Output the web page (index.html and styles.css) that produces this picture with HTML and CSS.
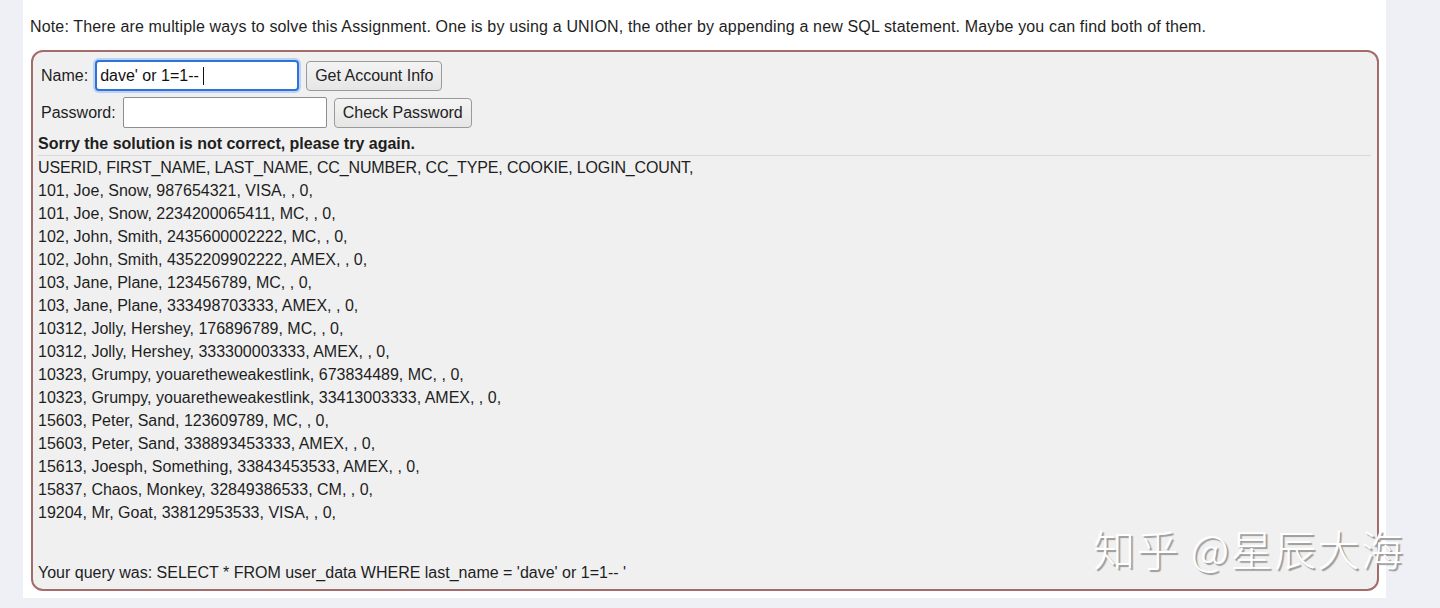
FILE: index.html
```html
<!DOCTYPE html>
<html lang="en">
<head>
<meta charset="utf-8">
<title>SQL Injection</title>
<link rel="stylesheet" href="styles.css">
</head>
<body>
<div class="card">
  <p class="note">Note: There are multiple ways to solve this Assignment. One is by using a UNION, the other by appending a new SQL statement. Maybe you can find both of them.</p>
  <div class="attack">
    <form class="form">
      <div class="row">
        <label class="lbl">Name:</label>
        <span class="input focus">dave' or 1=1--&nbsp;<span class="caret"></span></span>
        <button type="button" class="btn">Get Account Info</button>
      </div>
      <div class="row">
        <label class="lbl">Password:</label>
        <span class="input"></span>
        <button type="button" class="btn">Check Password</button>
      </div>
    </form>
    <div class="feedback">Sorry the solution is not correct, please try again.</div>
    <div class="output">
      <p class="line head">USERID, FIRST_NAME, LAST_NAME, CC_NUMBER, CC_TYPE, COOKIE, LOGIN_COUNT, </p>
      <p class="line">101, Joe, Snow, 987654321, VISA, , 0, </p>
      <p class="line">101, Joe, Snow, 2234200065411, MC, , 0, </p>
      <p class="line">102, John, Smith, 2435600002222, MC, , 0, </p>
      <p class="line">102, John, Smith, 4352209902222, AMEX, , 0, </p>
      <p class="line">103, Jane, Plane, 123456789, MC, , 0, </p>
      <p class="line">103, Jane, Plane, 333498703333, AMEX, , 0, </p>
      <p class="line">10312, Jolly, Hershey, 176896789, MC, , 0, </p>
      <p class="line">10312, Jolly, Hershey, 333300003333, AMEX, , 0, </p>
      <p class="line">10323, Grumpy, youaretheweakestlink, 673834489, MC, , 0, </p>
      <p class="line">10323, Grumpy, youaretheweakestlink, 33413003333, AMEX, , 0, </p>
      <p class="line">15603, Peter, Sand, 123609789, MC, , 0, </p>
      <p class="line">15603, Peter, Sand, 338893453333, AMEX, , 0, </p>
      <p class="line">15613, Joesph, Something, 33843453533, AMEX, , 0, </p>
      <p class="line">15837, Chaos, Monkey, 32849386533, CM, , 0, </p>
      <p class="line">19204, Mr, Goat, 33812953533, VISA, , 0, </p>
      <p class="query">Your query was: SELECT * FROM user_data WHERE last_name = 'dave' or 1=1-- '</p>
    </div>
  </div>
</div>
<div class="watermark">知乎 @星辰大海</div>
</body>
</html>
```

FILE: styles.css
```css
html, body {
  margin: 0;
  padding: 0;
}
body {
  background: #eff0f5;
  font-family: "Liberation Sans", Arial, Helvetica, sans-serif;
  font-size: 16px;
  color: #1e1e1e;
  height: 608px;
  overflow: hidden;
  position: relative;
}
.card {
  margin-left: 23px;
  width: 1363px;
  height: 598px;
  background: #ffffff;
  padding: 0 8px 0 7px;
  box-sizing: border-box;
  display: flex;
  flex-direction: column;
}
.note {
  margin: 0;
  padding-top: 15px;
  line-height: 23px;
  letter-spacing: 0.15px;
}
.attack {
  margin-top: 12px;
  margin-left: 1px;
  width: 1348px;
  border: 2px solid #a46b6b;
  border-radius: 12px;
  background: #f0f0f0;
  padding: 8px 6px 0 5px;
  box-sizing: border-box;
  height: 541px;
}
.form {
  display: flex;
  flex-direction: column;
  gap: 6px;
}
.row {
  display: flex;
  align-items: center;
  gap: 7px;
  padding-left: 3px;
}
.lbl {
  line-height: 20px;
}
.input {
  display: inline-flex;
  align-items: center;
  box-sizing: border-box;
  width: 204px;
  height: 31px;
  background: #fff;
  border: 1px solid #8e8e8e;
  border-radius: 2px;
  padding: 0 4px;
  font-size: 16px;
  color: #111;
  white-space: pre;
}
.focus {
  border: 2px solid #2f73d9;
  border-radius: 4px;
  box-shadow: 0 0 0 2px #b8d3f5;
  padding: 0 3px;
}
.caret {
  display: inline-block;
  width: 1px;
  height: 18px;
  background: #111;
}
.btn {
  font-family: inherit;
  font-size: 16px;
  color: #222;
  height: 30px;
  padding: 0 8px;
  background: linear-gradient(#f4f4f4, #e6e6e6);
  border: 1px solid #9a9a9a;
  border-radius: 4px;
}
.feedback {
  font-weight: bold;
  line-height: 23px;
  margin-top: 4px;
  border-bottom: 1px solid #d8d8d8;
}
.output {
  display: flex;
  flex-direction: column;
}
.line {
  margin: 0;
  line-height: 23px;
}
.head {
  letter-spacing: -0.15px;
}
.query {
  margin: 37px 0 0 0;
  line-height: 23px;
}
.watermark {
  position: absolute;
  left: 1093px;
  top: 520px;
  font-family: "Noto Sans CJK SC", sans-serif;
  font-weight: 300;
  font-size: 42px;
  line-height: 56px;
  color: #ffffff;
  text-shadow: 2px 2px 1px #9a9a9a;
  letter-spacing: 1.5px;
  white-space: nowrap;
}
```
